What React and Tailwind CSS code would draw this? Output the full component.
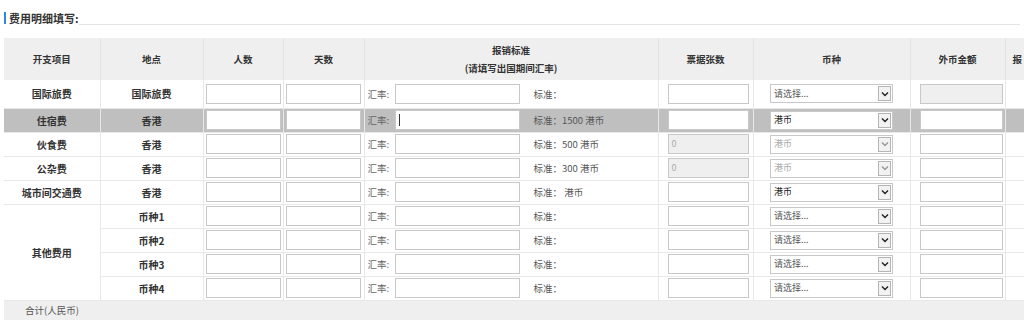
import React from 'react';

const font = { fontFamily: '"Noto Sans CJK SC", "Noto Sans", sans-serif' };

// 前五行固定费用
const fixedRows = [
  { item: '国际旅费', place: '国际旅费', std: '标准：', cur: '请选择...', fxDisabled: true, first: true },
  { item: '住宿费', place: '香港', std: '标准：1500 港币', cur: '港币', active: true },
  { item: '伙食费', place: '香港', std: '标准：500 港币', cur: '港币', locked: true },
  { item: '公杂费', place: '香港', std: '标准：300 港币', cur: '港币', locked: true },
  { item: '城市间交通费', place: '香港', std: '标准：\u00a0港币', cur: '港币' },
];

const otherRows = ['币种1', '币种2', '币种3', '币种4'];

function Box({ className = '', disabled, value, caret }) {
  return (
    <div
      className={`h-[20px] border border-[#c8c8c8] flex items-center px-[3px] text-[9px] ${
        disabled ? 'bg-[#efefef] text-[#aaa]' : 'bg-white text-[#333]'
      } ${className}`}
    >
      {value}
      {caret && <span className="inline-block w-px h-[12px] bg-[#333]" />}
    </div>
  );
}

function Select({ value, disabled }) {
  return (
    <div
      className={`mx-auto w-[123px] h-[19px] border border-[#c8c8c8] bg-white flex items-center justify-between pl-[3px] text-[9px] ${
        disabled ? 'text-[#aaa]' : value === '请选择...' ? 'text-[#555]' : 'text-[#222]'
      }`}
    >
      <span>{value}</span>
      <span className="w-[13px] h-[15px] mr-px border border-[#b5b5b5] bg-[#f2f2f2] flex items-center justify-center">
        <svg width="8" height="6" viewBox="0 0 8 6">
          <path d="M1 1.5 L4 4.5 L7 1.5" fill="none" stroke={disabled ? '#999' : '#222'} strokeWidth="1.4" />
        </svg>
      </span>
    </div>
  );
}

function RateCell({ std, caret }) {
  return (
    <div className="flex items-center pl-[3px] text-[9.5px] whitespace-nowrap">
      <span className="w-[27px] shrink-0 text-[#666]">汇率:</span>
      <Box className="w-[125px] shrink-0" caret={caret} />
      <span className="ml-[14px] text-[#555] whitespace-pre">{std}</span>
    </div>
  );
}

function Row({ r, children, h = 'h-[24px]' }) {
  return (
    <tr className={`${h} border-b border-[#e8e8e8] ${r.active ? 'bg-[#bfbfbf]' : 'bg-white'}`}>
      {children}
      <td className="border-l border-[#e8e8e8]">
        <Box className="mx-auto w-[75px]" />
      </td>
      <td className="border-l border-[#e8e8e8]">
        <Box className="mx-auto w-[75px]" />
      </td>
      <td className="border-l border-[#e8e8e8]">
        <RateCell std={r.std} caret={r.active} />
      </td>
      <td className="border-l border-[#e8e8e8]">
        <Box className="ml-[9px] w-[81px]" disabled={r.locked} value={r.locked ? '0' : ''} />
      </td>
      <td className="border-l border-[#e8e8e8]">
        <Select value={r.cur} disabled={r.locked} />
      </td>
      <td className="border-l border-[#e8e8e8]">
        <Box className="ml-[9px] w-[83px]" disabled={r.fxDisabled} />
      </td>
      <td className="border-l border-[#e8e8e8]" />
    </tr>
  );
}

export default function App() {
  return (
    <div className="w-[1024px] h-[328px] overflow-hidden bg-white px-[4px]" style={font}>
      {/* 标题 */}
      <div className="flex items-end h-[26px]">
        <div className="flex items-center pb-[2px]">
          <span className="w-[2px] h-[12px] bg-[#2a8ad8]" />
          <span className="ml-[3px] text-[11px] font-bold text-[#333] leading-none">费用明细填写:</span>
        </div>
        <div className="flex-1 border-b border-[#e3e3e3] mb-px" />
      </div>

      <table className="mt-[12px] w-[1100px] table-fixed border-collapse text-[10px] text-[#333]">
        <colgroup>
          <col className="w-[96px]" />
          <col className="w-[103px]" />
          <col className="w-[80px]" />
          <col className="w-[81px]" />
          <col className="w-[294px]" />
          <col className="w-[95px]" />
          <col className="w-[157px]" />
          <col className="w-[95px]" />
          <col className="w-[99px]" />
        </colgroup>
        <thead>
          <tr className="h-[42px] bg-[#efefef] text-center text-[9.5px] text-[#333]">
            <th className="font-bold">开支项目</th>
            <th className="font-bold border-l border-[#e2e2e2]">地点</th>
            <th className="font-bold border-l border-[#e2e2e2]">人数</th>
            <th className="font-bold border-l border-[#e2e2e2]">天数</th>
            <th className="font-bold border-l border-[#e2e2e2] leading-[18px]">
              报销标准
              <br />
              (请填写出国期间汇率)
            </th>
            <th className="font-bold border-l border-[#e2e2e2]">票据张数</th>
            <th className="font-bold border-l border-[#e2e2e2]">币种</th>
            <th className="font-bold border-l border-[#e2e2e2]">外币金额</th>
            <th className="font-bold border-l border-[#e2e2e2] text-left pl-[7px]">报</th>
          </tr>
        </thead>
        <tbody>
          {fixedRows.map((r) => (
            <Row key={r.item} r={r} h={r.first ? 'h-[28px]' : 'h-[24px]'}>
              <td className="text-center font-bold">{r.item}</td>
              <td className="text-center font-bold border-l border-[#e8e8e8]">{r.place}</td>
            </Row>
          ))}
          {otherRows.map((name, i) => (
            <Row key={name} r={{ std: '标准：', cur: '请选择...' }}>
              {i === 0 && (
                <td rowSpan={4} className="text-center font-bold bg-white">
                  其他费用
                </td>
              )}
              <td className="text-center font-bold border-l border-[#e8e8e8]">{name}</td>
            </Row>
          ))}
          <tr className="h-[20px] bg-[#efefef]">
            <td colSpan={9} className="pl-[21px] text-[9.5px] text-[#555]">
              合计(人民币)
            </td>
          </tr>
        </tbody>
      </table>
    </div>
  );
}
